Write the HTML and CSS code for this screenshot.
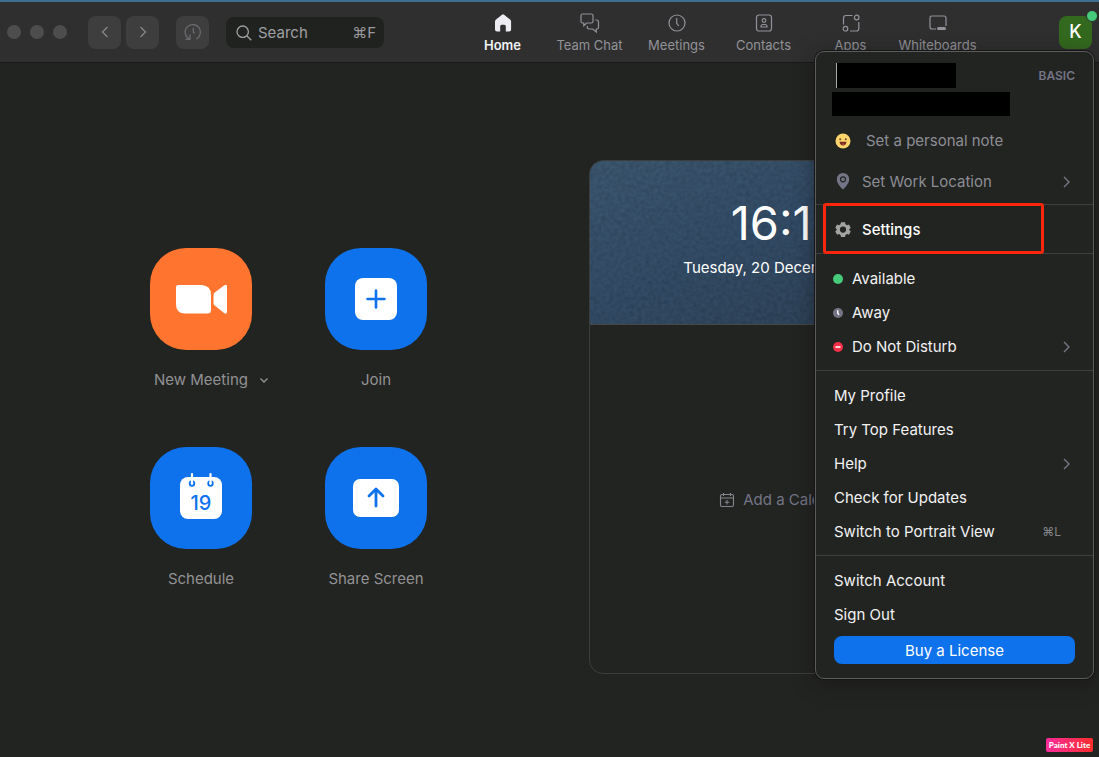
FILE: index.html
```html
<!DOCTYPE html>
<html lang="en">
<head>
<meta charset="utf-8">
<title>Zoom</title>
<link rel="stylesheet" href="styles.css">
</head>
<body>
<header class="topbar">
  <div class="lights"><span class="light"></span><span class="light"></span><span class="light"></span></div>
  <div class="history">
    <button class="square" aria-label="Back"><svg width="18" height="18" viewBox="0 0 18 18"><path d="M11.5 4 6.5 9l5 5"/></svg></button>
    <button class="square" aria-label="Forward"><svg width="18" height="18" viewBox="0 0 18 18"><path d="M6.5 4l5 5-5 5"/></svg></button>
  </div>
  <button class="square recent" aria-label="History"><svg width="18" height="18" viewBox="0 0 18 18"><path d="M6 16.2A7.6 7.6 0 1 1 12 16M6 11.500v4.900H1.500M9.300 5v4.300l1.500 1"/></svg></button>
  <label class="search">
    <svg width="16" height="16" viewBox="0 0 16 16"><circle cx="6.700" cy="6.700" r="5.700"/><path d="M11 11l4.300 4.300"/></svg>
    <input type="text" placeholder="Search" aria-label="Search">
    <span class="keys">⌘F</span>
  </label>
  <nav class="nav">
    <a href="#" class="tab active"><svg width="20" height="20" viewBox="0 0 20 20"><path class="solid" d="M10 1.300q.6 0 1.100.4l6 4.800q1 .8 1 2v8q0 2-2 2h-3.300v-5.300q0-1.500-1.500-1.500H8.700q-1.500 0-1.500 1.500v5.300H4q-2 0-2-2v-8q0-1.200 1-2l6-4.800q.4-.4 1-.4z"/></svg>Home</a>
    <a href="#" class="tab"><svg width="20" height="20" viewBox="0 0 20 20"><path d="M2.500 1h9Q13 1 13 2.500v6Q13 10 11.500 10H6.800l-3 2.600V10H2.500Q1 10 1 8.500v-6Q1 1 2.500 1zM15.300 7h1.200q2 0 2 2v5.500q0 1.500-1.500 1.500h-.7v3l-3.500-3H9q-1.700 0-1.700-1.700V13"/></svg>Team Chat</a>
    <a href="#" class="tab"><svg width="20" height="20" viewBox="0 0 20 20"><circle cx="10" cy="10" r="8"/><path d="M9.700 5v5l2 3"/></svg>Meetings</a>
    <a href="#" class="tab"><svg width="20" height="20" viewBox="0 0 20 20"><rect x="2.500" y="2" width="15" height="16" rx="2.500"/><circle cx="10" cy="7.500" r="1.800"/><path d="M7 14v-.5q0-2 2-2h2q2 0 2 2v.5z"/></svg>Contacts</a>
    <a href="#" class="tab"><svg width="20" height="20" viewBox="0 0 20 20"><circle cx="15.700" cy="4.500" r="2.300"/><circle cx="4.500" cy="15.700" r="2.300"/><path d="M2.500 11.500V5q0-2.500 2.500-2.500h6.500M17.800 9v6.500q0 2.500-2.500 2.500H9"/></svg>Apps</a>
    <a href="#" class="tab"><svg width="20" height="20" viewBox="0 0 20 20"><path d="M8 16H4q-2 0-2-2V5q0-2 2-2h12q2 0 2 2v8"/><path class="solid" d="M10.500 14h6q1.500 0 1.500 1.500T16.500 17h-6Q9 17 9 15.500t1.500-1.500z"/></svg>Whiteboards</a>
  </nav>
  <button class="avatar" aria-label="Account">K<span class="presence"></span></button>
</header>

<main class="home">
  <section class="actions">
    <div class="action">
      <button class="tile orange" aria-labelledby="new-meeting"><svg width="54" height="54" viewBox="0 0 54 54"><path fill="#fff" d="M4 13h23q10 0 10 10v15q0 3.500-3.500 3.500H11q-9 0-9-9V15q0-2 2-2zM39.500 23q0-1.500 1.200-2.500L50 13.600q3-2 3 1V40q0 3-3 1l-9.300-7.500q-1.200-1-1.200-2.500z"/></svg></button>
      <div class="caption"><span id="new-meeting">New Meeting</span><button class="more" aria-label="Meeting options"><svg width="10" height="10" viewBox="0 0 10 10"><path d="M1.500 3.500 5 7l3.500-3.500"/></svg></button></div>
    </div>
    <div class="action">
      <button class="tile" aria-labelledby="join"><svg width="54" height="54" viewBox="0 0 54 54"><rect x="6" y="6" width="42" height="42" rx="8" fill="#fff"/><path d="M27 18.500v17M18.500 27h17" stroke="#0e72ed" stroke-width="2.600" stroke-linecap="round"/></svg></button>
      <div class="caption" id="join">Join</div>
    </div>
    <div class="action">
      <button class="tile" aria-labelledby="schedule"><svg width="54" height="54" viewBox="0 0 54 54"><rect x="6" y="6" width="42" height="42" rx="8" fill="#fff"/><circle cx="18" cy="12.500" r="2.300" fill="none" stroke="#0e72ed" stroke-width="1.800"/><circle cx="36.500" cy="12.500" r="2.300" fill="none" stroke="#0e72ed" stroke-width="1.800"/><path d="M18 3v9M36.500 3v9" stroke="#fff" stroke-width="2.200" stroke-linecap="round"/><text class="day" x="27" y="39">19</text></svg></button>
      <div class="caption" id="schedule">Schedule</div>
    </div>
    <div class="action">
      <button class="tile" aria-labelledby="share"><svg width="54" height="54" viewBox="0 0 54 54"><rect x="4" y="8" width="46" height="38" rx="7" fill="#fff"/><path d="M27 35V18.500M20 25l7-7 7 7" fill="none" stroke="#0e72ed" stroke-width="2.800" stroke-linecap="round" stroke-linejoin="round"/></svg></button>
      <div class="caption" id="share">Share Screen</div>
    </div>
  </section>
  <section class="calendar">
    <div class="clock">
      <svg class="grain" aria-hidden="true"><filter id="grain"><feTurbulence type="fractalNoise" baseFrequency=".25" numOctaves="4"/><feColorMatrix values="0 0 0 0 0  0 0 0 0 0  0 0 0 0 0  1 0 0 0 -.3"/></filter><rect width="100%" height="100%" filter="url(#grain)"/></svg>
      <div class="time">16:10</div>
      <div class="date">Tuesday, 20 December 2022</div>
    </div>
    <div class="agenda">
      <button class="add"><svg width="16" height="16" viewBox="0 0 16 16"><rect x="1.500" y="2.500" width="13" height="12" rx="1.500"/><path d="M1.500 6h13M4.500 1v3M11.500 1v3M8 8v4.500M5.800 10.200h4.500"/></svg>Add a Calendar</button>
    </div>
  </section>
</main>

<aside class="menu">
  <div class="group profile">
    <div class="who"><span class="redacted name"></span><span class="plan">BASIC</span></div>
    <div class="redacted mail"></div>
    <button class="item tall note"><svg class="icon" width="16" height="16" viewBox="0 0 16 16"><circle cx="8" cy="8" r="7.500" fill="#fbd56b"/><circle cx="5.200" cy="6.300" r="1" fill="#6b4520"/><circle cx="10.800" cy="6.300" r="1" fill="#6b4520"/><path d="M4.500 8.800h7q-.5 3.700-3.500 3.700T4.500 8.800z" fill="#742b22"/><path d="M6.500 11q1.500-1 3 0-1.500 1.500-3 0z" fill="#ef5050"/></svg>Set a personal note</button>
    <button class="item tall"><svg class="icon" width="16" height="18" viewBox="0 0 16 18"><path fill="#747487" fill-rule="evenodd" d="M8 0a6.200 6.200 0 0 1 6.200 6.300c0 4-3.700 7.700-6.200 10.400C5.500 14 1.800 10.300 1.800 6.300A6.200 6.200 0 0 1 8 0zm0 3.200a3.100 3.100 0 1 0 0 6.200 3.100 3.100 0 0 0 0-6.200z"/><circle cx="8" cy="6.300" r="1.900" fill="#747487"/></svg>Set Work Location<svg class="arrow" width="12" height="12" viewBox="0 0 12 12"><path d="M3 1l5 5-5 5"/></svg></button>
  </div>
  <div class="group marked">
    <button class="item bright"><svg class="icon" width="16" height="16" viewBox="0 0 16 16"><path fill="#a3a3a3" fill-rule="evenodd" d="M6 .3h4l.5 2 1.500.9 2-.6 1.700 3.200-1.400 1.400v.9l1.400 1.500L14 12.700l-2-.6-1.500.9-.5 1.900H6L5.500 13 4 12.100l-2 .6L.3 9.600l1.400-1.500v-.9L.3 5.800 2 2.600l2 .6 1.500-.9zM8 4.500a3.100 3.100 0 1 0 0 6.200 3.100 3.100 0 0 0 0-6.200z"/></svg>Settings</button>
    <span class="highlight"></span>
  </div>
  <div class="group status">
    <button class="item"><svg class="icon" width="10" height="10" viewBox="0 0 10 10"><circle cx="5" cy="5" r="5" fill="#45cb7a"/></svg>Available</button>
    <button class="item"><svg class="icon" width="10" height="10" viewBox="0 0 10 10"><circle cx="5" cy="5" r="5" fill="#747487"/><path d="M4.700 2.200V5l1.300 1.800" fill="none" stroke="#fff" stroke-width="1.400"/></svg>Away</button>
    <button class="item"><svg class="icon" width="10" height="10" viewBox="0 0 10 10"><circle cx="5" cy="5" r="5" fill="#f52f48"/><path d="M2.500 5h5" stroke="#fff" stroke-width="1.600"/></svg>Do Not Disturb<svg class="arrow" width="12" height="12" viewBox="0 0 12 12"><path d="M3 1l5 5-5 5"/></svg></button>
  </div>
  <div class="group">
    <button class="item">My Profile</button>
    <button class="item">Try Top Features</button>
    <button class="item">Help<svg class="arrow" width="12" height="12" viewBox="0 0 12 12"><path d="M3 1l5 5-5 5"/></svg></button>
    <button class="item">Check for Updates</button>
    <button class="item">Switch to Portrait View<span class="shortcut">⌘L</span></button>
  </div>
  <div class="group last">
    <button class="item">Switch Account</button>
    <button class="item">Sign Out</button>
    <button class="buy">Buy a License</button>
  </div>
</aside>
<div class="stamp">Paint X Lite</div>
</body>
</html>
```
FILE: styles.css
```css
* { box-sizing: border-box; }
body {
  margin: 0;
  min-height: 100vh;
  position: relative;
  display: flex;
  flex-direction: column;
  background: #222421;
  color: #f2f2f4;
  font: 15px/20px Inter, "Liberation Sans", sans-serif;
}
button {
  margin: 0;
  padding: 0;
  border: 0;
  background: none;
  color: inherit;
  font: inherit;
}
svg { flex: none; }

.topbar {
  display: flex;
  align-items: center;
  height: 63px;
  padding: 0 7px;
  background: #2f2f2f;
  border-top: 2px solid #3e6f92;
  border-bottom: 1px solid #191919;
}
.lights { display: flex; gap: 9px; }
.light { width: 14px; height: 14px; border-radius: 50%; background: #4d4d4d; }
.history { display: flex; gap: 5px; margin-left: 21px; }
.square {
  display: grid;
  place-items: center;
  width: 33px;
  height: 33px;
  border-radius: 8px;
  background: #3e3e3e;
}
.square svg { fill: none; stroke: #88888c; stroke-width: 1.3; }
.square.recent { margin-left: 17px; }
.square.recent svg { stroke: #69696d; }
.search {
  display: flex;
  align-items: center;
  gap: 6px;
  width: 158px;
  height: 31px;
  margin-left: 17px;
  padding: 2px 8px 0 10px;
  border-radius: 8px;
  background: #20221f;
  color: #9a9a9e;
}
.search svg { fill: none; stroke: #a0a0a4; stroke-width: 1.3; }
.search input {
  flex: 1;
  min-width: 0;
  padding: 0;
  border: 0;
  outline: 0;
  background: none;
  color: inherit;
  font: inherit;
}
.search input::placeholder { color: #a0a0a4; opacity: 1; }
.nav { display: flex; margin-left: 75px; padding-top: 2px; }
.tab {
  display: flex;
  flex-direction: column;
  align-items: center;
  gap: 3px;
  width: 87px;
  color: #929298;
  font-size: 13px;
  line-height: 18px;
  text-decoration: none;
  white-space: nowrap;
}
.tab svg { fill: none; stroke: #92929a; stroke-width: 1.2; }
.tab .solid { fill: #92929a; stroke: none; }
.tab.active { color: #f2f2f5; font-weight: 600; }
.tab.active .solid { fill: #ececf2; }
.avatar {
  position: relative;
  width: 33px;
  height: 33px;
  margin-left: auto;
  border-radius: 8px;
  background: #33691e;
  color: #fff;
  font-size: 18px;
  font-weight: 500;
}
.presence {
  position: absolute;
  top: -6px;
  right: -6px;
  width: 12px;
  height: 12px;
  border: 1px solid #2f2f2f;
  border-radius: 50%;
  background: #45cb7a;
}

.home {
  flex: 1;
  display: grid;
  grid-template-columns: 345fr 394fr;
  column-gap: 128px;
  align-items: center;
  padding: 97px 116px 83px;
}
.actions {
  display: grid;
  grid-template-columns: 102px 102px;
  gap: 57px 73px;
  justify-content: center;
  padding-top: 2px;
}
.action { display: flex; flex-direction: column; align-items: center; gap: 20px; }
.tile {
  display: grid;
  place-items: center;
  width: 102px;
  height: 102px;
  border-radius: 36px;
  background: #0e72ed;
}
.orange { background: #ff742e; }
.day { fill: #0e72ed; font-size: 20px; font-weight: 500; text-anchor: middle; }
.caption { position: relative; color: #929294; white-space: nowrap; }
.more {
  position: absolute;
  left: 100%;
  top: 0;
  height: 20px;
  margin-left: 11px;
  display: grid;
  place-items: center;
}
.more svg { fill: none; stroke: #929294; stroke-width: 1.4; }

.calendar {
  align-self: stretch;
  display: flex;
  flex-direction: column;
  min-height: 514px;
  border: 1px solid #3c3e3c;
  border-radius: 14px;
  overflow: hidden;
}
.clock {
  position: relative;
  display: flex;
  flex-direction: column;
  align-items: center;
  height: 164px;
  padding-top: 34px;
  border-bottom: 1px solid #454748;
  background: linear-gradient(155deg, #3c5770 0%, #334c66 45%, #2c3f52 100%);
  color: #fff;
}
.grain { position: absolute; inset: 0; width: 100%; height: 100%; opacity: .25; }
.time { position: relative; font-size: 47px; line-height: 56px; }
.date { position: relative; margin-top: 7px; }
.agenda { flex: 1; display: grid; place-items: center; padding-top: 2px; }
.add { display: flex; align-items: center; gap: 8px; color: #747487; }
.add svg { fill: none; stroke: #85858f; stroke-width: 1.1; }

.menu {
  position: absolute;
  top: 51px;
  right: 5px;
  width: 279px;
  border: 1px solid #5b5c5b;
  border-radius: 9px;
  background: #222421;
  box-shadow: 0 0 0 1px #151515, 0 4px 20px rgba(20, 16, 20, .5);
}
.group { padding: 8px 18px 6px; border-bottom: 1px solid #3d3e40; }
.profile { padding-top: 11px; padding-bottom: 2px; }
.who { display: flex; justify-content: space-between; align-items: center; margin-left: 2px; }
.redacted { display: block; background: #000; }
.name { width: 120px; height: 25px; border-left: 1px solid #aaa; }
.mail { width: 178px; height: 24px; margin: 4px 0 4px -2px; }
.plan { color: #747487; font-size: 12px; font-weight: 600; }
.item {
  display: flex;
  align-items: center;
  width: 100%;
  height: 34px;
  text-align: left;
  white-space: nowrap;
}
.icon { margin: 0 11px 0 1px; }
.tall { height: 41px; color: #8d8d96; }
.note .icon { margin-right: 15px; }
.status .icon { margin: 0 9px 0 -1px; }
.arrow { margin-left: auto; margin-right: 2px; fill: none; stroke: #777783; stroke-width: 1.4; }
.marked { position: relative; }
.bright { color: #fff; font-weight: 500; }
.highlight {
  position: absolute;
  top: -2px;
  bottom: -1px;
  left: 7px;
  width: 221px;
  border: 3px solid #fb260b;
  border-radius: 3px;
  pointer-events: none;
}
.shortcut { margin-left: auto; margin-right: 14px; color: #85858b; font-size: 12px; }
.last { padding-bottom: 14px; border-bottom: 0; }
.buy {
  width: 100%;
  height: 28px;
  margin-top: 4px;
  padding-top: 1px;
  border-radius: 8px;
  background: #0e72ed;
  color: #fff;
}

.stamp {
  position: absolute;
  right: 6px;
  bottom: 5px;
  width: 47px;
  border-radius: 2px;
  background: linear-gradient(90deg, #ff2d9b, #ff2d2d);
  color: #fff;
  font: 900 8px/14px Lato, sans-serif;
  text-align: center;
  white-space: nowrap;
}
```
